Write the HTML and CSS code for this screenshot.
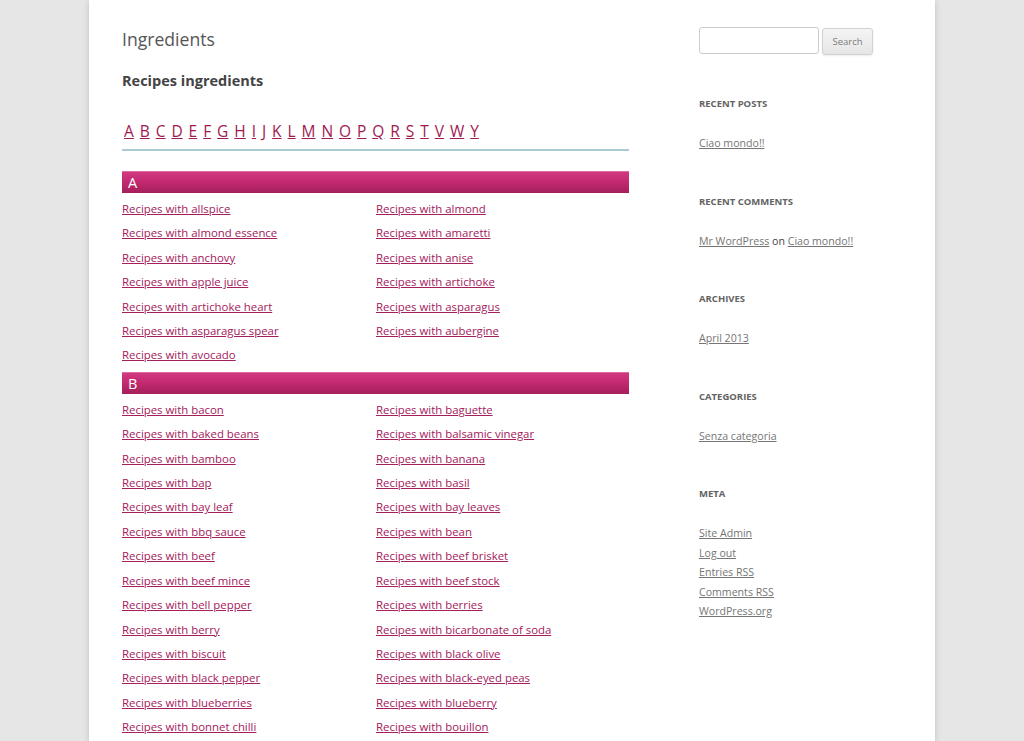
FILE: index.html
```html
<!DOCTYPE html>
<html lang="it">
<head>
    <meta charset="UTF-8">
    <meta name="viewport" content="width=device-width, initial-scale=1.0">
    <title>Ingredients</title>
    <link rel="stylesheet" href="styles.css">
</head>
<body>

    <div class="site">
        <main class="content">
            <h1 class="page-title">Ingredients</h1>
            <h2 class="section-title">Recipes ingredients</h2>

            <nav class="alphabet">
                <a href="#a">A</a> <a href="#b">B</a> <a href="#">C</a> <a href="#">D</a> <a href="#">E</a> <a href="#">F</a> <a href="#">G</a> <a href="#">H</a> <a href="#">I</a> <a href="#">J</a> <a href="#">K</a> <a href="#">L</a> <a href="#">M</a> <a href="#">N</a> <a href="#">O</a> <a href="#">P</a> <a href="#">Q</a> <a href="#">R</a> <a href="#">S</a> <a href="#">T</a> <a href="#">V</a> <a href="#">W</a> <a href="#">Y</a>
            </nav>

            <div class="letter-bar" id="a">A</div>
            <ul class="ingredient-list">
                <li><a href="#">Recipes with allspice</a></li>
                <li><a href="#">Recipes with almond</a></li>
                <li><a href="#">Recipes with almond essence</a></li>
                <li><a href="#">Recipes with amaretti</a></li>
                <li><a href="#">Recipes with anchovy</a></li>
                <li><a href="#">Recipes with anise</a></li>
                <li><a href="#">Recipes with apple juice</a></li>
                <li><a href="#">Recipes with artichoke</a></li>
                <li><a href="#">Recipes with artichoke heart</a></li>
                <li><a href="#">Recipes with asparagus</a></li>
                <li><a href="#">Recipes with asparagus spear</a></li>
                <li><a href="#">Recipes with aubergine</a></li>
                <li><a href="#">Recipes with avocado</a></li>
            </ul>

            <div class="letter-bar" id="b">B</div>
            <ul class="ingredient-list">
                <li><a href="#">Recipes with bacon</a></li>
                <li><a href="#">Recipes with baguette</a></li>
                <li><a href="#">Recipes with baked beans</a></li>
                <li><a href="#">Recipes with balsamic vinegar</a></li>
                <li><a href="#">Recipes with bamboo</a></li>
                <li><a href="#">Recipes with banana</a></li>
                <li><a href="#">Recipes with bap</a></li>
                <li><a href="#">Recipes with basil</a></li>
                <li><a href="#">Recipes with bay leaf</a></li>
                <li><a href="#">Recipes with bay leaves</a></li>
                <li><a href="#">Recipes with bbq sauce</a></li>
                <li><a href="#">Recipes with bean</a></li>
                <li><a href="#">Recipes with beef</a></li>
                <li><a href="#">Recipes with beef brisket</a></li>
                <li><a href="#">Recipes with beef mince</a></li>
                <li><a href="#">Recipes with beef stock</a></li>
                <li><a href="#">Recipes with bell pepper</a></li>
                <li><a href="#">Recipes with berries</a></li>
                <li><a href="#">Recipes with berry</a></li>
                <li><a href="#">Recipes with bicarbonate of soda</a></li>
                <li><a href="#">Recipes with biscuit</a></li>
                <li><a href="#">Recipes with black olive</a></li>
                <li><a href="#">Recipes with black pepper</a></li>
                <li><a href="#">Recipes with black-eyed peas</a></li>
                <li><a href="#">Recipes with blueberries</a></li>
                <li><a href="#">Recipes with blueberry</a></li>
                <li><a href="#">Recipes with bonnet chilli</a></li>
                <li><a href="#">Recipes with bouillon</a></li>
            </ul>
        </main>

        <aside class="sidebar">
            <form class="search-form">
                <input type="text" class="search-field">
                <button type="submit" class="search-btn">Search</button>
            </form>

            <section class="widget">
                <h3 class="widget-title">Recent Posts</h3>
                <ul>
                    <li><a href="#">Ciao mondo!!</a></li>
                </ul>
            </section>

            <section class="widget">
                <h3 class="widget-title">Recent Comments</h3>
                <ul>
                    <li><a href="#">Mr WordPress</a> on <a href="#">Ciao mondo!!</a></li>
                </ul>
            </section>

            <section class="widget">
                <h3 class="widget-title">Archives</h3>
                <ul>
                    <li><a href="#">April 2013</a></li>
                </ul>
            </section>

            <section class="widget">
                <h3 class="widget-title">Categories</h3>
                <ul>
                    <li><a href="#">Senza categoria</a></li>
                </ul>
            </section>

            <section class="widget">
                <h3 class="widget-title">Meta</h3>
                <ul class="meta-list">
                    <li><a href="#">Site Admin</a></li>
                    <li><a href="#">Log out</a></li>
                    <li><a href="#">Entries RSS</a></li>
                    <li><a href="#">Comments RSS</a></li>
                    <li><a href="#">WordPress.org</a></li>
                </ul>
            </section>
        </aside>
    </div>

</body>
</html>
```

FILE: styles.css
```css
* {
    margin: 0;
    padding: 0;
    box-sizing: border-box;
}

html {
    overflow: hidden;
}

body {
    background: #e6e6e6;
    font-family: 'Open Sans', 'Liberation Sans', sans-serif;
    color: #444;
}

.site {
    width: 846px;
    margin: 0 auto;
    background: white;
    box-shadow: 0 2px 6px rgba(100,100,100,0.3);
    padding: 0 33px 40px;
    display: flex;
    gap: 70px;
}

.content {
    width: 507px;
    padding-top: 27px;
}

.page-title {
    font-size: 17.6px;
    font-weight: 400;
    color: #555;
    line-height: 24px;
}

.section-title {
    font-size: 14.5px;
    font-weight: 700;
    color: #444;
    line-height: 22px;
    margin-top: 19px;
}

.alphabet {
    margin-top: 27px;
    padding: 0 0 6px 2px;
    border-bottom: 2px solid #a9cbd1;
    font-size: 15.5px;
    line-height: 24px;
    word-spacing: 1.9px;
}

.alphabet a {
    color: #a01a52;
}

.letter-bar {
    margin-top: 20px;
    height: 22px;
    line-height: 22px;
    padding-left: 6px;
    color: white;
    font-size: 14.5px;
    background: linear-gradient(to bottom, #d0397f 0%, #c62b73 40%, #a51f5b 100%);
    border-top: 1px solid #e06aa2;
}

/* later letters sit a little tighter under the previous list */
.ingredient-list + .letter-bar {
    margin-top: 4px;
    margin-bottom: 1px;
}

.ingredient-list {
    list-style: none;
    display: grid;
    grid-template-columns: 254px 253px;
    margin-top: 4px;
}

.ingredient-list li {
    font-size: 11.4px;
    line-height: 24.4px;
}

.ingredient-list a {
    color: #a3205c;
}

.sidebar {
    width: 203px;
    padding-top: 27px;
}

.search-form {
    display: flex;
    gap: 3px;
    margin-bottom: 39px;
}

.search-field {
    width: 120px;
    height: 27px;
    border: 1px solid #ccc;
    border-radius: 3px;
}

.search-btn {
    width: 51px;
    height: 27px;
    margin-top: 1px;
    font-family: 'Open Sans', 'Liberation Sans', sans-serif;
    font-size: 9.5px;
    color: #7c7c7c;
    border: 1px solid #d2d2d2;
    border-radius: 3px;
    background: linear-gradient(to bottom, #f4f4f4, #e6e6e6);
    box-shadow: 0 1px 2px rgba(64,64,64,0.1);
}

.widget {
    margin-bottom: 37.5px;
}

.widget-title {
    font-size: 9.5px;
    font-weight: 700;
    text-transform: uppercase;
    color: #636363;
    line-height: 20px;
    margin-bottom: 18px;
}

.widget ul {
    list-style: none;
    font-size: 10.6px;
    line-height: 22px;
    color: #444;
}

.widget a {
    color: #757575;
}

.widget .meta-list {
    padding-top: 2px;
    line-height: 19.5px;
}
```
